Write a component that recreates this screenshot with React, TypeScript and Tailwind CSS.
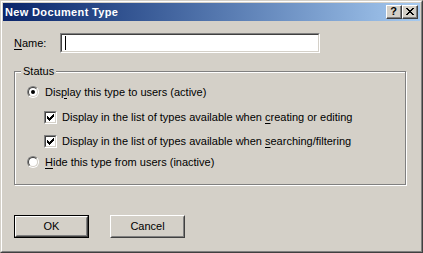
import { ReactNode } from "react";

const font = { fontFamily: '"Liberation Sans", Arial, sans-serif' };

function Radio({ checked }: { checked?: boolean }) {
    return (
        <div className="w-[12px] h-[12px] rounded-full border border-t-[#808080] border-l-[#808080] border-r-white border-b-white shrink-0">
            <div className="w-full h-full rounded-full border border-t-[#404040] border-l-[#404040] border-r-[#d4d0c8] border-b-[#d4d0c8] bg-white flex items-center justify-center">
                {checked && <div className="w-[4px] h-[4px] rounded-full bg-black" />}
            </div>
        </div>
    );
}

function Checkbox() {
    return (
        <div className="w-[13px] h-[13px] border border-t-[#808080] border-l-[#808080] border-r-white border-b-white shrink-0">
            <div className="w-full h-full border border-t-[#404040] border-l-[#404040] border-r-[#d4d0c8] border-b-[#d4d0c8] bg-white flex items-center justify-center">
                <svg width="7" height="7" viewBox="0 0 7 7" shapeRendering="crispEdges">
                    <path d="M0 2h1v3h-1zM1 3h1v3h-1zM2 4h1v3h-1zM3 3h1v3h-1zM4 2h1v3h-1zM5 1h1v3h-1zM6 0h1v3h-1z" fill="#000" />
                </svg>
            </div>
        </div>
    );
}

function Button({ children, isDefault }: { children: ReactNode; isDefault?: boolean }) {
    return (
        <div className={isDefault ? "w-[75px] h-[23px] border border-black" : "w-[75px] h-[23px]"}>
            <div className="w-full h-full border border-t-white border-l-white border-r-[#404040] border-b-[#404040]">
                <div className="w-full h-full border border-t-[#d4d0c8] border-l-[#d4d0c8] border-r-[#808080] border-b-[#808080] flex items-center justify-center text-[11px] text-black">
                    {children}
                </div>
            </div>
        </div>
    );
}

function CaptionButton({ children }: { children: ReactNode }) {
    return (
        <div className="w-[16px] h-[14px] bg-[#d4d0c8] border border-t-white border-l-white border-r-[#404040] border-b-[#404040]">
            <div className="w-full h-full border-r border-b border-r-[#808080] border-b-[#808080] flex items-center justify-center">
                {children}
            </div>
        </div>
    );
}

export default function App() {
    return (
        <div style={font} className="w-[423px] h-[253px] bg-[#d4d0c8] border border-t-[#d4d0c8] border-l-[#d4d0c8] border-r-[#404040] border-b-[#404040]">
            <div className="w-full h-full border border-t-white border-l-white border-r-[#808080] border-b-[#808080] p-[1px] flex flex-col">
                {/* title bar */}
                <div className="h-[18px] bg-gradient-to-r from-[#0a246a] to-[#a6caf0] flex items-center pl-[2px] pr-[2px]">
                    <span className="text-white font-bold text-[11px] tracking-[0.35px] leading-none">New Document Type</span>
                    <div className="ml-auto flex">
                        <CaptionButton>
                            <span className="text-black font-bold text-[11px] leading-none -mt-[1px]">?</span>
                        </CaptionButton>
                        <div className="w-[0px]" />
                        <CaptionButton>
                            <svg width="8" height="7" viewBox="0 0 8 7" shapeRendering="crispEdges">
                                <path d="M0 0h2v1h-2zM6 0h2v1h-2zM1 1h2v1h-2zM5 1h2v1h-2zM2 2h4v1h-4zM3 3h2v1h-2zM2 4h4v1h-4zM1 5h2v1h-2zM5 5h2v1h-2zM0 6h2v1h-2zM6 6h2v1h-2z" fill="#000" />
                            </svg>
                        </CaptionButton>
                    </div>
                </div>

                {/* body */}
                <div className="flex flex-col pl-[11px] text-[11px] text-black">
                    <div className="mt-[12px] flex items-center h-[20px]">
                        <span className="w-[46px]"><span className="underline underline-offset-2">N</span>ame:</span>
                        <div className="w-[260px] h-[20px] border border-t-[#808080] border-l-[#808080] border-r-white border-b-white">
                            <div className="w-full h-full border border-t-[#404040] border-l-[#404040] border-r-[#d4d0c8] border-b-[#d4d0c8] bg-white pl-[3px] pt-[1px]">
                                <div className="w-[1px] h-[14px] bg-black" />
                            </div>
                        </div>
                    </div>

                    <div className="relative mt-[18px] w-[392px] h-[114px] border border-[#808080] shadow-[inset_1px_1px_0_#fff,1px_1px_0_#fff] pl-[12px]">
                        <span className="absolute left-[6px] -top-[8px] bg-[#d4d0c8] px-[2px] leading-[14px]">Status</span>
                        <div className="mt-[12px] h-[16px] flex items-center gap-[6px]">
                            <Radio checked />
                            <span>Dis<span className="underline underline-offset-2">p</span>lay this type to users (active)</span>
                        </div>
                        <div className="mt-[9px] h-[16px] flex items-center gap-[5px] pl-[17px]">
                            <Checkbox />
                            <span>Display in the list of types available when <span className="underline underline-offset-2">c</span>reating or editing</span>
                        </div>
                        <div className="mt-[8px] h-[16px] flex items-center gap-[5px] pl-[17px]">
                            <Checkbox />
                            <span>Display in the list of types available when <span className="underline underline-offset-2">s</span>earching/filtering</span>
                        </div>
                        <div className="mt-[5px] h-[16px] flex items-center gap-[6px]">
                            <Radio />
                            <span><span className="underline underline-offset-2">H</span>ide this type from users (inactive)</span>
                        </div>
                    </div>

                    <div className="mt-[30px] flex gap-[21px]">
                        <Button isDefault>OK</Button>
                        <Button>Cancel</Button>
                    </div>
                </div>
            </div>
        </div>
    );
}
